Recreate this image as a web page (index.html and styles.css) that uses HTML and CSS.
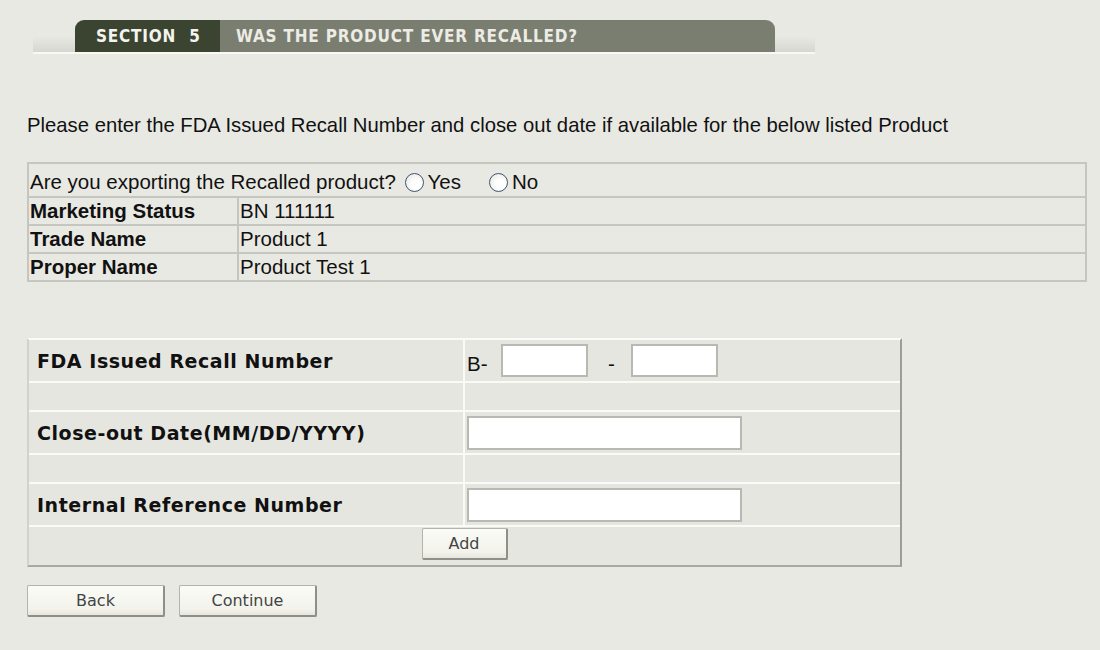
FILE: index.html
```
<!DOCTYPE html>
<html>
<head>
<meta charset="utf-8">
<link rel="stylesheet" href="styles.css">
</head>
<body>
<div class="page">
  <div class="section-bar">
    <div class="tab">
      <span class="tab-num">SECTION 5</span>
      <span class="tab-title">WAS THE PRODUCT EVER RECALLED?</span>
    </div>
  </div>

  <p class="intro">Please enter the FDA Issued Recall Number and close out date if available for the below listed Product</p>

  <table class="product">
    <tr class="first">
      <td colspan="2" class="full">Are you exporting the Recalled product? <span class="radio-group"><input type="radio" name="exp" class="radio"><span class="radio-label">Yes</span><input type="radio" name="exp" class="radio radio-no"><span class="radio-label">No</span></span></td>
    </tr>
    <tr>
      <th>Marketing Status</th>
      <td>BN 111111</td>
    </tr>
    <tr>
      <th>Trade Name</th>
      <td>Product 1</td>
    </tr>
    <tr class="last">
      <th>Proper Name</th>
      <td>Product Test 1</td>
    </tr>
  </table>

  <table class="recall">
    <tr class="tall">
      <th>FDA Issued Recall Number</th>
      <td><div class="recall-num"><span class="prefix">B-</span><input type="text" class="box short first-box"><span class="dash">-</span><input type="text" class="box short"></div></td>
    </tr>
    <tr class="gap">
      <th></th>
      <td></td>
    </tr>
    <tr class="tall">
      <th>Close-out Date(MM/DD/YYYY)</th>
      <td><input type="text" class="box long"></td>
    </tr>
    <tr class="gap">
      <th></th>
      <td></td>
    </tr>
    <tr class="tall">
      <th>Internal Reference Number</th>
      <td><input type="text" class="box long"></td>
    </tr>
    <tr class="add-row">
      <td colspan="2" class="add-cell"><button class="btn btn-add">Add</button></td>
    </tr>
  </table>

  <div class="actions">
    <button class="btn btn-nav">Back</button>
    <button class="btn btn-nav">Continue</button>
  </div>
</div>
</body>
</html>
```

FILE: styles.css
```
html, body {
  margin: 0;
  padding: 0;
  background: #e9e9e4;
}

.page {
  padding: 20px 0 0 27px;
  font-family: "Liberation Sans", Arial, sans-serif;
  color: #111;
}

/* Section header */
.section-bar {
  margin-left: 6px;
  width: 782px;
  padding-left: 42px;
  box-sizing: border-box;
  border-bottom: 2px solid #f8f8f4;
  background: linear-gradient(to bottom, rgba(210, 210, 203, 0) 50%, rgba(210, 210, 203, 0.8) 100%);
}

.tab {
  display: flex;
  width: 700px;
  height: 32px;
  border-radius: 9px 9px 0 0;
  overflow: hidden;
  font-family: "DejaVu Sans Condensed", "DejaVu Sans", sans-serif;
  font-weight: bold;
  font-size: 17px;
  line-height: 32px;
  letter-spacing: 0.8px;
}

.tab-num {
  background: #3b4331;
  color: #f4f4ee;
  width: 145px;
  padding-left: 21px;
  box-sizing: border-box;
  word-spacing: 7px;
}

.tab-title {
  flex: 1;
  background: #7a7e71;
  color: #ececE4;
  padding-left: 16px;
}

.intro {
  margin: 59px 0 0 0;
  font-size: 20.3px;
  line-height: 24px;
}

/* Product table */
.product {
  margin-top: 25px;
  width: 1060px;
  border-collapse: separate;
  border-spacing: 0;
  border: 2px solid #c6c6c0;
  font-size: 20.5px;
}

.product th,
.product td {
  padding: 0 1px;
  height: 26px;
  line-height: 24px;
  border-bottom: 2px solid #c6c6c0;
  text-align: left;
  vertical-align: middle;
}

.product th {
  width: 206px;
  font-weight: bold;
  border-right: 2px solid #c6c6c0;
}

.product .first td {
  height: 28px;
  padding-top: 4px;
}

.product .last th,
.product .last td {
  border-bottom: none;
}

.radio-group {
  display: inline-flex;
  align-items: center;
  vertical-align: -3px;
  margin-left: 3px;
}

.radio {
  appearance: none;
  -webkit-appearance: none;
  width: 19px;
  height: 19px;
  margin: 0 4px 0 0;
  border: 1.5px solid #3f5570;
  border-radius: 50%;
  background: radial-gradient(circle at 60% 60%, #ffffff 30%, #e2e2dc 100%);
  box-sizing: border-box;
}

.radio-no {
  margin-left: 28px;
}

.radio-label {
  line-height: 24px;
}

/* Recall table */
.recall {
  margin-top: 56px;
  width: 875px;
  border-collapse: separate;
  border-spacing: 0;
  border-top: 2px solid #fafaf6;
  border-left: 2px solid #d2d2cc;
  border-right: 2px solid #9d9d97;
  border-bottom: 2px solid #a9a9a3;
  background: #e6e6e0;
}

.recall th,
.recall td {
  padding: 0;
  border-bottom: 2px solid #fafaf6;
  text-align: left;
  vertical-align: middle;
}

.recall th {
  width: 436px;
  padding-left: 8px;
  box-sizing: border-box;
  border-right: 2px solid #fafaf6;
  font-family: "DejaVu Sans", Verdana, sans-serif;
  font-weight: bold;
  font-size: 19px;
  letter-spacing: 0.55px;
  color: #111;
}

.recall td {
  padding-left: 2px;
}

.recall .tall th,
.recall .tall td {
  height: 41px;
}

.recall .gap th,
.recall .gap td {
  height: 27px;
}

.recall .add-row td {
  height: 37px;
  border-bottom: none;
  padding-left: 0;
  text-align: center;
  vertical-align: top;
  padding-top: 1px;
}

.recall-num {
  display: flex;
  align-items: center;
  font-size: 20.5px;
}

.prefix {
  width: 20px;
  margin-top: 6px;
}

.dash {
  width: 7px;
  margin: 6px 16px 0 20px;
}

.box {
  box-sizing: border-box;
  margin: 0;
  padding: 0;
  border: 2px solid #b9b9b3;
  background: #fff;
  outline: none;
  display: block;
}

.short {
  width: 87px;
  height: 33px;
}

.first-box {
  margin-left: 14px;
}

.long {
  width: 275px;
  height: 34px;
}

/* Buttons */
.btn {
  font-family: "DejaVu Sans", Tahoma, sans-serif;
  font-size: 16px;
  color: #444;
  background: linear-gradient(to bottom, #fbfbf7 0%, #f3f3ec 80%, #e6e6df 100%);
  border: 1px solid #b4b4ae;
  border-right: 2px solid #8f8f89;
  border-bottom: 2px solid #8f8f89;
  border-radius: 2px;
  box-sizing: border-box;
  height: 32px;
  padding: 0;
  margin: 0;
}

.btn-add {
  width: 86px;
}

.actions {
  display: flex;
  gap: 14px;
  margin-top: 18px;
}

.btn-nav {
  width: 138px;
}
```
